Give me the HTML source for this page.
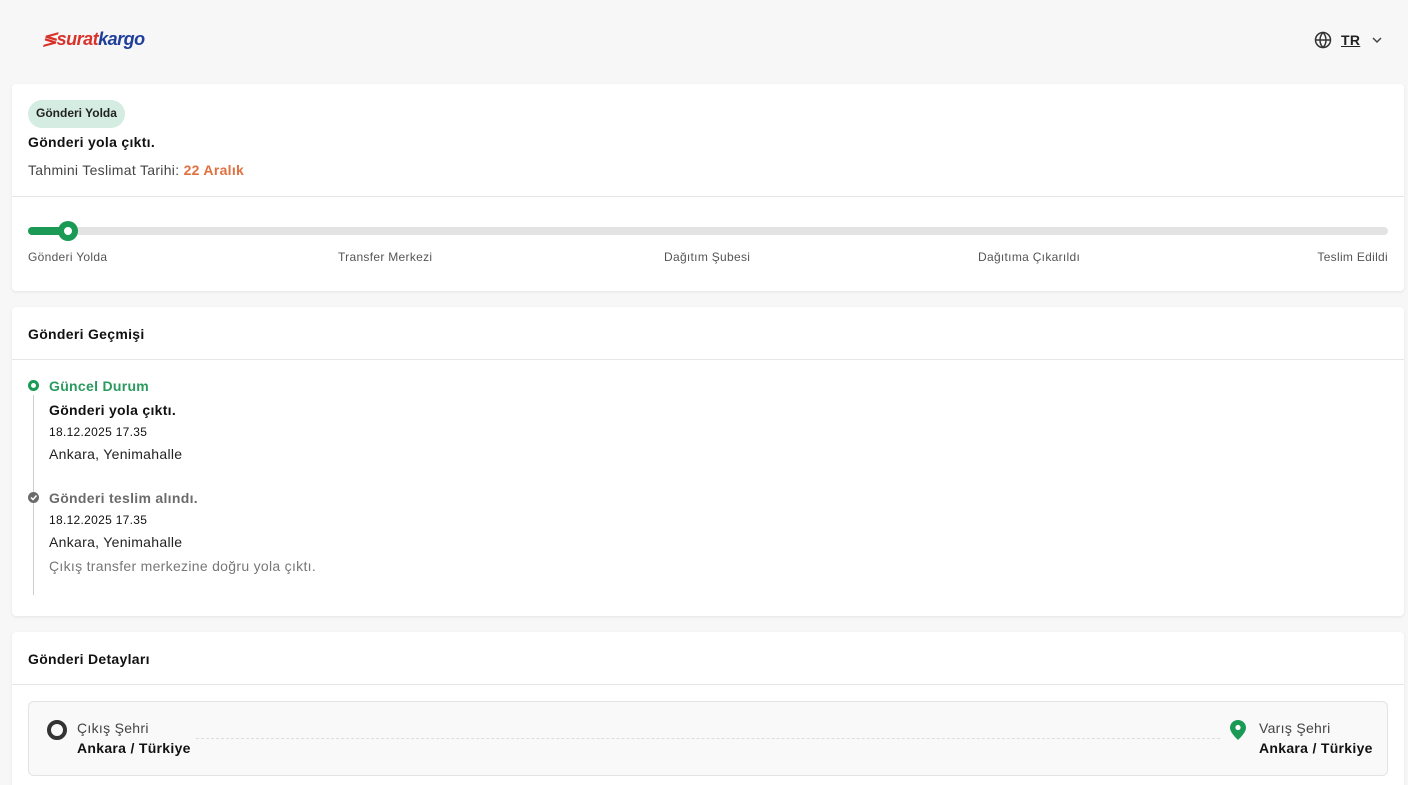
<!DOCTYPE html>
<html><head><meta charset="utf-8"><style>
*{box-sizing:border-box;margin:0;padding:0}
html,body{width:1408px;height:785px;overflow:hidden}
body{background:#f7f7f7;font-family:"Liberation Sans",Arial,sans-serif;color:#111;position:relative}
.abs{position:absolute}
.card{position:absolute;left:12px;width:1392px;background:#fff;border-radius:4px;box-shadow:0 1px 3px rgba(0,0,0,.08)}
.hr{position:absolute;left:0;right:0;height:1px;background:#e6e6e6}
.t{position:absolute;white-space:nowrap;letter-spacing:0.3px}
</style></head><body>
<div class="t" style="left:42px;top:29px;font-size:18px;font-weight:bold;font-style:italic;letter-spacing:-0.5px">
<span style="color:#d8322b">≶surat</span><span style="color:#1f3f9a">kargo</span></div>
<svg class="abs" style="left:1314px;top:31px" width="18" height="18" viewBox="0 0 24 24" fill="none" stroke="#333" stroke-width="2"><circle cx="12" cy="12" r="10"/><path d="M2 12h20M12 2c3 3 4 6.5 4 10s-1 7-4 10c-3-3-4-6.5-4-10s1-7 4-10z"/></svg>
<div class="t" style="left:1341px;top:32px;font-size:14px;font-weight:bold;text-decoration:underline;color:#222">TR</div>
<svg class="abs" style="left:1372px;top:35px" width="10" height="10" viewBox="0 0 10 10" fill="none" stroke="#444" stroke-width="1.5"><path d="M1 3l4 4 4-4"/></svg>

<div class="card" style="top:84px;height:207px">
 <div class="abs" style="left:16px;top:16px;width:97px;height:28px;border-radius:14px;background:#d5ece2"></div>
 <div class="t" style="left:24px;top:22px;font-size:12px;font-weight:bold;color:#222;letter-spacing:0">Gönderi Yolda</div>
 <div class="t" style="left:16px;top:50px;font-size:14px;font-weight:bold">Gönderi yola çıktı.</div>
 <div class="t" style="left:16px;top:78px;font-size:14px;color:#444">Tahmini Teslimat Tarihi: <b style="color:#e07040">22 Aralık</b></div>
 <div class="hr" style="top:112px"></div>
 <div class="abs" style="left:16px;top:143px;width:1360px;height:8px;border-radius:4px;background:#e3e3e3"></div>
 <div class="abs" style="left:16px;top:143px;width:44px;height:8px;border-radius:4px;background:#1a9a55"></div>
 <div class="abs" style="left:46px;top:137px;width:20px;height:20px;border-radius:50%;background:#1a9a55"></div>
 <div class="abs" style="left:52px;top:143px;width:8px;height:8px;border-radius:50%;background:#fff"></div>
 <div class="t" style="left:16px;top:166px;font-size:12px;color:#555">Gönderi Yolda</div>
 <div class="t" style="left:326px;top:166px;font-size:12px;color:#555">Transfer Merkezi</div>
 <div class="t" style="left:652px;top:166px;font-size:12px;color:#555">Dağıtım Şubesi</div>
 <div class="t" style="left:966px;top:166px;font-size:12px;color:#555">Dağıtıma Çıkarıldı</div>
 <div class="t" style="right:16px;top:166px;font-size:12px;color:#555">Teslim Edildi</div>
</div>

<div class="card" style="top:307px;height:309px">
 <div class="t" style="left:16px;top:19px;font-size:14px;font-weight:bold">Gönderi Geçmişi</div>
 <div class="hr" style="top:52px"></div>
 <div class="abs" style="left:21px;top:88px;width:1px;height:200px;background:#ccc"></div>
 <div class="abs" style="left:16px;top:73px;width:11px;height:11px;border-radius:50%;border:3px solid #1a9a55;background:#fff"></div>
 <div class="t" style="left:37px;top:71px;font-size:14px;font-weight:bold;color:#2a9a5e">Güncel Durum</div>
 <div class="t" style="left:37px;top:95px;font-size:14px;font-weight:bold">Gönderi yola çıktı.</div>
 <div class="t" style="left:37px;top:118px;font-size:12px">18.12.2025 17.35</div>
 <div class="t" style="left:37px;top:139px;font-size:14px;color:#222">Ankara, Yenimahalle</div>
 <div class="abs" style="left:16px;top:185px;width:11px;height:11px;border-radius:50%;background:#6b6b6b"></div>
 <svg class="abs" style="left:16px;top:185px" width="11" height="11" viewBox="0 0 11 11" fill="none" stroke="#fff" stroke-width="1.5"><path d="M3 5.5l2 2 3.5-4"/></svg>
 <div class="t" style="left:37px;top:183px;font-size:14px;font-weight:bold;color:#6b6b6b">Gönderi teslim alındı.</div>
 <div class="t" style="left:37px;top:206px;font-size:12px">18.12.2025 17.35</div>
 <div class="t" style="left:37px;top:227px;font-size:14px;color:#222">Ankara, Yenimahalle</div>
 <div class="t" style="left:37px;top:251px;font-size:14px;color:#777">Çıkış transfer merkezine doğru yola çıktı.</div>
</div>

<div class="card" style="top:632px;height:170px">
 <div class="t" style="left:16px;top:19px;font-size:14px;font-weight:bold">Gönderi Detayları</div>
 <div class="hr" style="top:52px"></div>
 <div class="abs" style="left:16px;top:69px;width:1360px;height:75px;border:1px solid #e3e3e3;border-radius:6px;background:#f9f9f9"></div>
 <div class="abs" style="left:35px;top:88px;width:20px;height:20px;border-radius:50%;border:4px solid #333"></div>
 <div class="t" style="left:65px;top:88px;font-size:14px;color:#444">Çıkış Şehri</div>
 <div class="t" style="left:65px;top:108px;font-size:14px;font-weight:bold">Ankara / Türkiye</div>
 <div class="abs" style="left:184px;top:106px;width:1024px;border-top:1px dashed #ddd"></div>
 <svg class="abs" style="left:1217px;top:87px" width="18" height="22" viewBox="0 0 18 22"><path d="M9 1C4.6 1 1 4.4 1 8.8 1 14 9 21 9 21s8-7 8-12.2C17 4.4 13.4 1 9 1z" fill="#1a9a55"/><circle cx="9" cy="8.5" r="2.6" fill="#fff"/></svg>
 <div class="t" style="left:1247px;top:88px;font-size:14px;color:#444">Varış Şehri</div>
 <div class="t" style="left:1247px;top:108px;font-size:14px;font-weight:bold">Ankara / Türkiye</div>
</div>
</body></html>
